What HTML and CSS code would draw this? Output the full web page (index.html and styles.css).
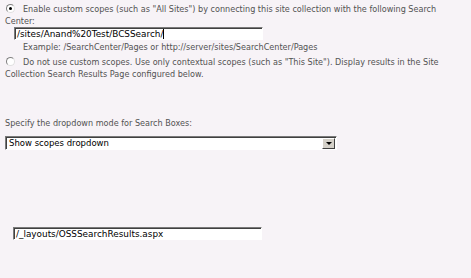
FILE: index.html
```
<!DOCTYPE html>
<html lang="en">
<head>
    <meta charset="UTF-8">
    <title>Search Settings</title>
    <link rel="stylesheet" href="styles.css">
</head>
<body>
    <div class="page">
        <div class="option">
            <span class="radio checked"></span>Enable custom scopes (such as "All Sites") by connecting this site collection with the following Search Center:
        </div>
        <div class="field field-center"><span class="value">/sites/Anand%20Test/BCSSearch/</span><span class="caret"></span></div>
        <div class="hint">Example: /SearchCenter/Pages or http://server/sites/SearchCenter/Pages</div>

        <div class="option option-second">
            <span class="radio"></span>Do not use custom scopes. Use only contextual scopes (such as "This Site"). Display results in the Site Collection Search Results Page configured below.
        </div>

        <div class="label">Specify the dropdown mode for Search Boxes:</div>
        <div class="select">
            <span class="select-value">Show scopes dropdown</span>
            <span class="select-button"><span class="arrow"></span></span>
        </div>

        <div class="field field-results"><span class="value">/_layouts/OSSSearchResults.aspx</span></div>
    </div>
</body>
</html>
```
FILE: styles.css
```
body {
    margin: 0;
    background: #f7f3f7;
}

.page {
    padding: 3px 0 0 5px;
    width: 455px;
    font-family: "DejaVu Sans", Verdana, sans-serif;
    font-size: 8.1px;
    line-height: 12px;
    color: #525252;
}

.option {
    width: 452px;
}

.option-second {
    margin-top: 3px;
}

.radio {
    display: inline-block;
    width: 7px;
    height: 7px;
    margin: 0 8px 0 1px;
    vertical-align: -1px;
    border-radius: 50%;
    background: #ffffff;
    border: 1px solid #808080;
    border-right-color: #e0e0e0;
    border-bottom-color: #e0e0e0;
    box-sizing: content-box;
    position: relative;
}

.radio.checked::after {
    content: "";
    position: absolute;
    left: 2px;
    top: 2px;
    width: 3px;
    height: 3px;
    border-radius: 50%;
    background: #000000;
}

.field {
    height: 11px;
    border: 1px solid #ffffff;
    border-top: 1px solid #7a7a7a;
    border-left: 1px solid #7a7a7a;
    box-shadow: inset 1px 1px 0 #404040;
    background: #ffffff;
    color: #000000;
    padding: 0 2px;
    display: flex;
    align-items: center;
    width: 243px;
    font-size: 8.9px;
}

.field-center {
    margin: 0 0 0 9px;
}

.caret {
    width: 1px;
    height: 10px;
    background: #000000;
}

.hint {
    margin: 1px 0 0 18px;
}

.label {
    margin-top: 37px;
}

.select {
    margin-top: 7px;
    width: 330px;
    height: 12px;
    border: 1px solid #ffffff;
    border-top: 1px solid #7a7a7a;
    border-left: 1px solid #7a7a7a;
    box-shadow: inset 1px 1px 0 #404040;
    background: #ffffff;
    display: flex;
    align-items: center;
    color: #000000;
    font-size: 8.5px;
}

.select-value {
    flex: 1;
    padding-left: 3px;
}

.select-button {
    width: 13px;
    height: 11px;
    margin: 1px 1px 0 0;
    background: #d4d0c8;
    border: 1px solid #ffffff;
    border-right-color: #404040;
    border-bottom-color: #404040;
    box-sizing: border-box;
    display: flex;
    align-items: center;
    justify-content: center;
}

.arrow {
    width: 0;
    height: 0;
    border-left: 3px solid transparent;
    border-right: 3px solid transparent;
    border-top: 3px solid #000000;
}

.field-results {
    margin: 77px 0 0 8px;
}
```
